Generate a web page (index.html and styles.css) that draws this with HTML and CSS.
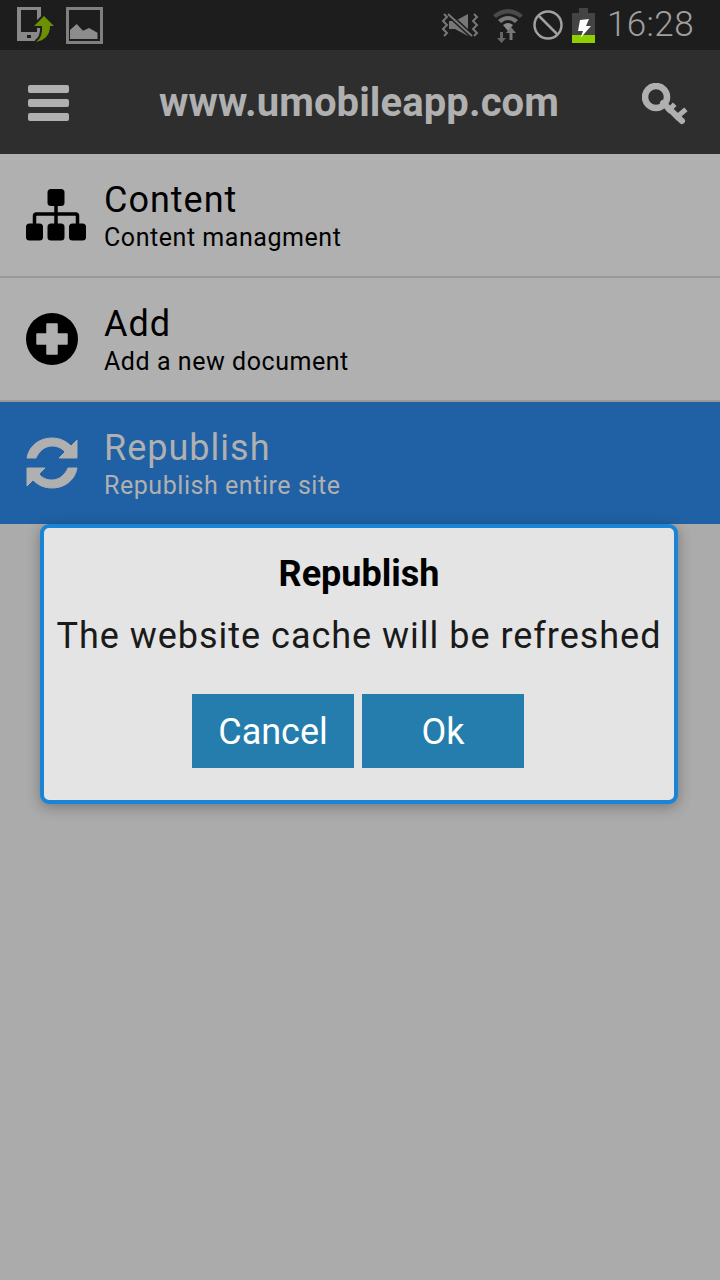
FILE: index.html
```html
<!DOCTYPE html>
<html lang="en">
<head>
    <meta charset="UTF-8">
    <meta name="viewport" content="width=device-width, initial-scale=1.0">
    <title>www.umobileapp.com</title>
    <link rel="stylesheet" href="styles.css">
</head>
<body>
<div class="app">
    <div class="status-bar">
        <div class="status-left">
            <svg class="ic-upload" width="38" height="36" viewBox="0 0 38 36">
                <path fill-rule="evenodd" d="M0 0H24V34H0ZM4 3V25H20V3ZM10 28V31H14V28Z" fill="#888"/>
                <path d="M19 35Q33 32 33 19H37L27 9L17 19H25Q26 30 19 35Z" fill="#6b9100" stroke="#1d1d1d" stroke-width="4" paint-order="stroke"/>
            </svg>
            <svg class="ic-picture" width="37" height="37" viewBox="0 0 37 37">
                <rect x="1.500" y="1.500" width="34" height="34" fill="none" stroke="#808080" stroke-width="3"/>
                <path d="M4 32V23L10.700 17L17 23.700L23 21L31.500 25.700V32Z" fill="#8c8c8c"/>
            </svg>
        </div>
        <div class="status-right">
            <svg class="ic-mute" width="38" height="24" viewBox="0 0 38 24">
                <path d="M8 8H14L27 1V23L14 16H8Z" fill="#777"/>
                <path d="M7 1L31 23" stroke="#1d1d1d" stroke-width="5"/>
                <path d="M7 1L31 23" stroke="#777" stroke-width="2"/>
                <path d="M3 1L6 4L2 8L6 12L2 16L6 20L3 23M33 1L36 4L32 8L36 12L32 16L36 20L33 23" fill="none" stroke="#777" stroke-width="2"/>
            </svg>
            <svg class="ic-wifi" width="32" height="36" viewBox="0 0 32 36">
                <path d="M1 8Q16 -4 31 8L28 11Q16 2 4 11Z" fill="#4a4a4a"/>
                <path d="M6 13Q16 5 26 13L23 16Q16 10 9 16Z" fill="#777"/>
                <path d="M11 18Q16 14 21 18L16 24Z" fill="#8c8c8c"/>
                <path d="M8 25H11V31H14L9.500 36L5 31H8Z" fill="#666"/>
                <path d="M17.500 33V26H14L19 20L24 26H20.500V33Z" fill="#777"/>
            </svg>
            <svg class="ic-block" width="30" height="30" viewBox="0 0 30 30">
                <circle cx="15" cy="15" r="13.500" fill="none" stroke="#a0a0a0" stroke-width="2.500"/>
                <path d="M6 6L24 24" stroke="#a0a0a0" stroke-width="2.500"/>
            </svg>
            <svg class="ic-battery" width="23" height="35" viewBox="0 0 23 35">
                <path d="M7 0H16V5H23V27H0V5H7Z" fill="#444"/>
                <rect y="27" width="23" height="8" fill="#8dd100"/>
                <path d="M8 12L17 11L14 18H19L8.500 30L11 23H6Z" fill="#fff"/>
            </svg>
            <span class="clock">16:28</span>
        </div>
    </div>

    <div class="nav-bar">
        <div class="nav-menu">
            <span></span>
            <span></span>
            <span></span>
        </div>
        <div class="nav-title">www.umobileapp.com</div>
        <svg class="nav-key" width="46" height="44" viewBox="0 0 46 44">
            <circle cx="14" cy="14" r="11" fill="none" stroke="#b0b0b0" stroke-width="6.500"/>
            <circle cx="13" cy="12" r="3.500" fill="#2e2e2e"/>
            <path d="M21 20L40 38" stroke="#b0b0b0" stroke-width="6" stroke-linecap="round"/>
            <path d="M27 27L31 23M35 34L42 28" stroke="#b0b0b0" stroke-width="5" stroke-linecap="square"/>
        </svg>
    </div>

    <div class="menu-list">
        <a href="#" class="menu-item">
            <svg class="menu-icon" width="60" height="52" viewBox="0 0 60 52">
                <rect x="21.500" y="0" width="17" height="17" rx="3.500"/>
                <rect x="0" y="34.500" width="17" height="17" rx="3.500"/>
                <rect x="21.500" y="34.500" width="17" height="17" rx="3.500"/>
                <rect x="43" y="34.500" width="17" height="17" rx="3.500"/>
                <path d="M30 15V36M8.500 36V27Q8.500 25 10.500 25H49.500Q51.500 25 51.500 27V36" fill="none" stroke="#000" stroke-width="3.500"/>
            </svg>
            <div class="menu-text">
                <div class="menu-name">Content</div>
                <div class="menu-desc">Content managment</div>
            </div>
        </a>
        <a href="#" class="menu-item">
            <svg class="menu-icon" width="60" height="52" viewBox="0 0 60 52">
                <circle cx="26" cy="26" r="26"/>
                <path d="M21 11H31V21H41V31H31V41H21V31H11V21H21Z" fill="#b0b0b0" stroke="#b0b0b0" stroke-width="1.500" stroke-linejoin="round"/>
            </svg>
            <div class="menu-text">
                <div class="menu-name">Add</div>
                <div class="menu-desc">Add a new document</div>
            </div>
        </a>
        <a href="#" class="menu-item active">
            <svg class="menu-icon" width="60" height="52" viewBox="0 0 60 52">
                <path d="M1 21C3 9 13 1 26 1C34 1 40 4 45 9L51 3V21H33L39 15C36 11 31 9 26 9C19 9 13 14 10 21Z" fill="#b0b0b0" stroke="#b0b0b0" stroke-linejoin="round"/>
                <path d="M51 31C49 43 39 51 26 51C18 51 12 48 7 43L1 49V31H19L13 37C16 41 21 43 26 43C33 43 39 38 42 31Z" fill="#b0b0b0" stroke="#b0b0b0" stroke-linejoin="round"/>
            </svg>
            <div class="menu-text">
                <div class="menu-name">Republish</div>
                <div class="menu-desc">Republish entire site</div>
            </div>
        </a>
    </div>

    <div class="dialog">
        <div class="dialog-title">Republish</div>
        <div class="dialog-msg">The website cache will be refreshed</div>
        <div class="dialog-btns">
            <a href="#" class="btn">Cancel</a>
            <a href="#" class="btn">Ok</a>
        </div>
    </div>
</div>
</body>
</html>
```

FILE: styles.css
```css
html, body {
    margin: 0;
    padding: 0;
}
body {
    background: #ababab;
    font-family: Roboto, "Noto Sans", sans-serif;
}
a {
    text-decoration: none;
    color: inherit;
}
.app {
    position: relative;
    width: 720px;
    height: 1280px;
    overflow: hidden;
}
.status-bar {
    height: 50px;
    background: #1d1d1d;
    display: flex;
    justify-content: space-between;
    align-items: center;
}
.status-left {
    display: flex;
    align-items: center;
    gap: 11px;
    padding-left: 17px;
}
.status-right {
    display: flex;
    align-items: center;
    padding-right: 26px;
}
.ic-mute {
    margin-right: 13px;
}
.ic-wifi {
    margin-right: 9px;
}
.ic-block {
    margin-right: 9px;
}
.ic-battery {
    margin-right: 12px;
}
.clock {
    color: #a0a0a0;
    font-size: 35px;
    line-height: 50px;
    letter-spacing: 0.4px;
    font-weight: 300;
}
.nav-bar {
    height: 104px;
    background: #2e2e2e;
    display: flex;
    align-items: center;
    padding: 0 32px 0 28px;
}
.nav-menu {
    display: flex;
    flex-direction: column;
    gap: 6px;
    width: 41px;
    margin-top: 2px;
}
.nav-menu span {
    display: block;
    height: 8px;
    border-radius: 2px;
    background: #b0b0b0;
}
.nav-title {
    flex: 1;
    padding-left: 7px;
    text-align: center;
    color: #b0b0b0;
    font-size: 40px;
    font-weight: 700;
    letter-spacing: 0.1px;
}
.nav-key {
    margin-top: 5px;
}
.menu-list {
    display: flex;
    flex-direction: column;
}
.menu-item {
    display: flex;
    align-items: center;
    height: 122px;
    padding-left: 26px;
    background: #b0b0b0;
    border-bottom: 2px solid #999;
    color: #000;
}
.menu-item.active {
    background: #2061a5;
    color: #b0b0b0;
    border-bottom: 0;
}
.menu-icon {
    flex: none;
    margin-right: 18px;
}
.menu-text {
    padding-top: 2px;
}
.menu-name {
    font-size: 36px;
    line-height: 42px;
    letter-spacing: 1px;
}
.menu-desc {
    margin-top: 2px;
    font-size: 25px;
    line-height: 30px;
    letter-spacing: 0.55px;
}
.dialog {
    position: absolute;
    left: 40px;
    top: 524px;
    width: 630px;
    height: 272px;
    border: 4px solid #1a85d6;
    border-radius: 9px;
    background: #e4e4e4;
    box-shadow: 0 3px 14px rgba(0, 0, 0, 0.3);
    color: #000;
    text-align: center;
}
.dialog-title {
    margin-top: 24px;
    font-size: 36px;
    line-height: 44px;
    font-weight: 700;
}
.dialog-msg {
    margin-top: 18px;
    font-size: 36px;
    line-height: 44px;
    letter-spacing: 0.98px;
    color: #1a1a1a;
}
.dialog-btns {
    display: flex;
    justify-content: center;
    gap: 8px;
    margin-top: 36px;
    padding-right: 2px;
}
.btn {
    width: 162px;
    height: 74px;
    line-height: 76px;
    background: #247dac;
    color: #fff;
    font-size: 36px;
}
```
